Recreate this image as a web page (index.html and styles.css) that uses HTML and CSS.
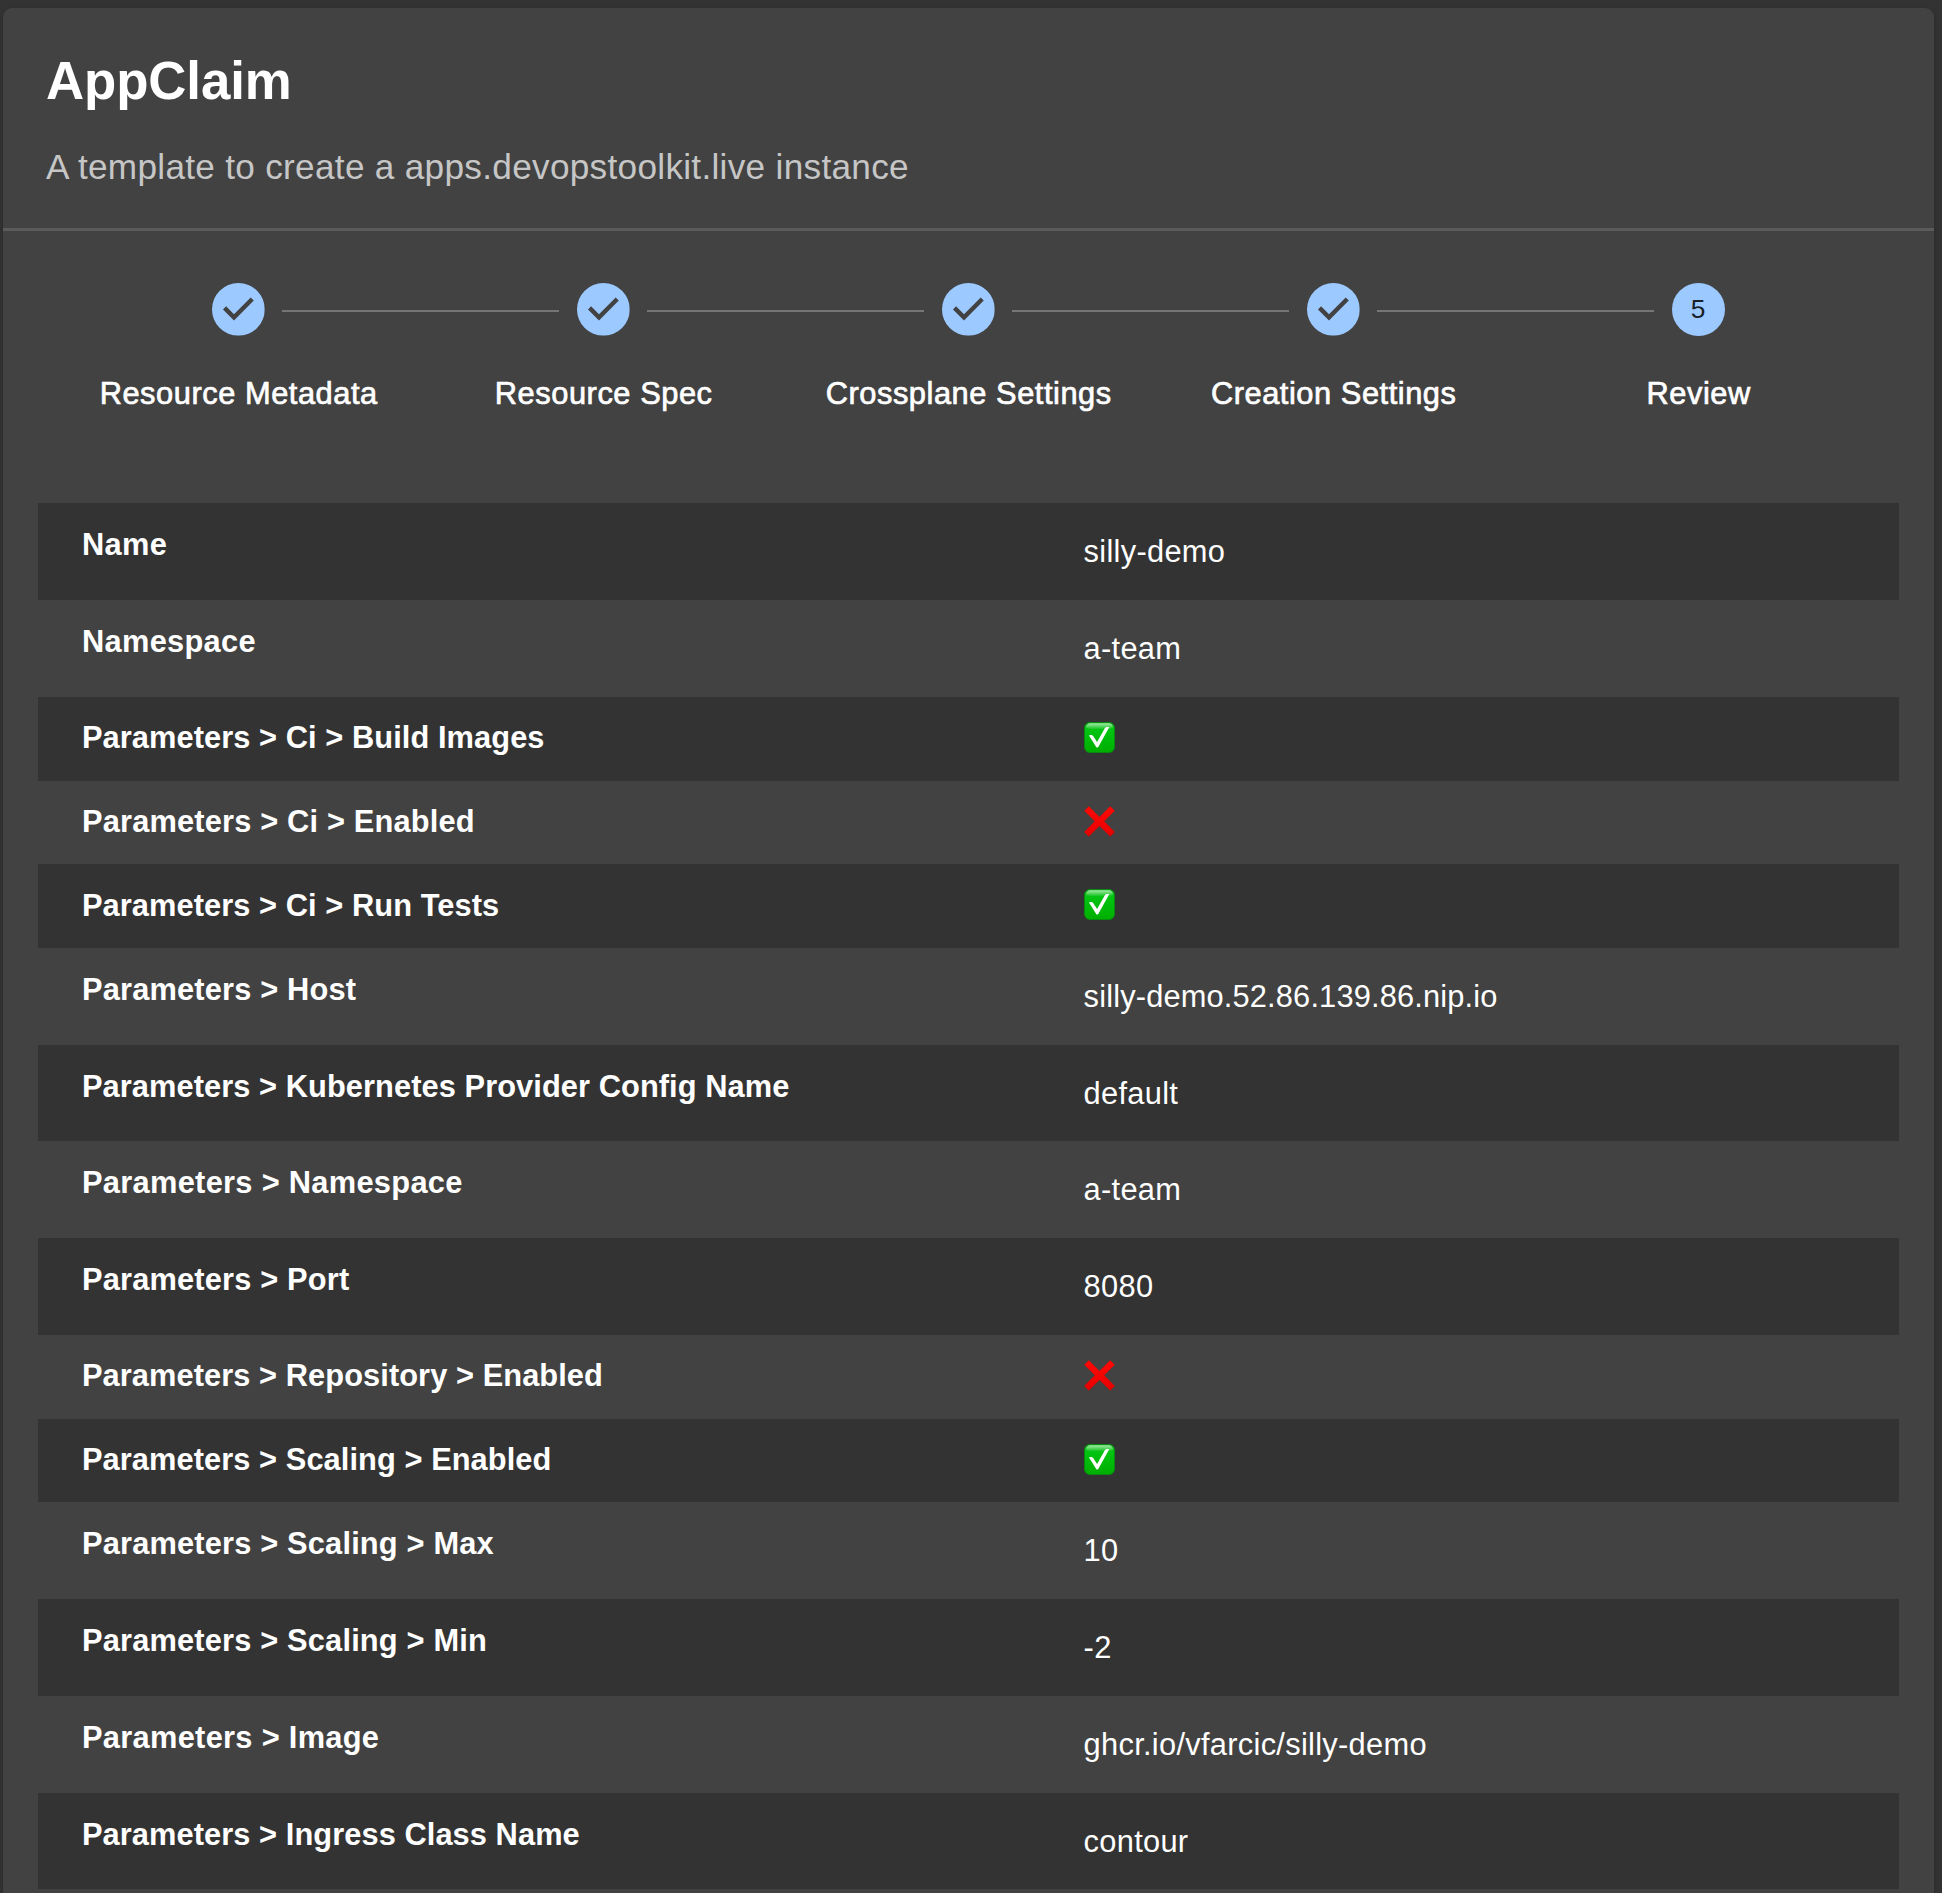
FILE: index.html
```html
<!DOCTYPE html>
<html lang="en">
<head>
<meta charset="utf-8">
<title>AppClaim</title>
<link rel="stylesheet" href="styles.css">
</head>
<body>
<svg width="0" height="0" class="defs" aria-hidden="true">
  <defs>
    <linearGradient id="green" x1="0" y1="0" x2="0" y2="1">
      <stop offset="0" stop-color="#12c41c"/>
      <stop offset=".3" stop-color="#00c210"/>
      <stop offset="1" stop-color="#00ae00"/>
    </linearGradient>
    <linearGradient id="gloss" x1="0" y1="0" x2="0" y2="1">
      <stop offset="0" stop-color="#fff" stop-opacity=".62"/>
      <stop offset="1" stop-color="#fff" stop-opacity=".06"/>
    </linearGradient>
    <linearGradient id="red" x1="0" y1="0" x2="0" y2="1">
      <stop offset="0" stop-color="#ff0a06"/>
      <stop offset="1" stop-color="#e60000"/>
    </linearGradient>
    <symbol id="done" viewBox="0 0 24 24">
      <path fill="#9cc9ff" d="M12 0a12 12 0 1 0 0 24 12 12 0 0 0 0-24zm-2 17l-5-5 1.4-1.4 3.6 3.6 7.6-7.6L19 8l-9 9z"/>
    </symbol>
    <symbol id="yes" viewBox="0 0 31 31">
      <rect x=".5" y=".5" width="30" height="30" rx="5.5" fill="url(#green)" stroke="#078a10"/>
      <path d="M6 1.2h19c2 0 3.4 1.4 4 3.4C29 6.6 26 7 24 7H7C5 7 2 6.6 2 4.600 2.600 2.600 4 1.200 6 1.200z" fill="url(#gloss)"/>
      <path d="M5 13.500c1.600-.8 3.400-.6 4.200.6l3.900 6L20.800 6.200c.8-1.300 2.700-1.400 4.400-1L14.300 25c-.6.800-1.600.8-2.100 0z" fill="#fff"/>
    </symbol>
    <symbol id="no" viewBox="0 0 31 31">
      <path d="M4.800.3L15.500 10.900 26.200.3l4.500 4.500-10.500 10.500 10.500 10.700-4.500 4.500-10.700-10.500L4.800 30.500.3 26 10.800 15.300.3 4.800z" fill="url(#red)" stroke="#a51512" stroke-opacity=".6" stroke-width=".4"/>
    </symbol>
  </defs>
</svg>
<main class="card">
  <header class="card-header">
    <h1 class="title">AppClaim</h1>
    <p class="subtitle">A template to create a apps.devopstoolkit.live instance</p>
  </header>
  <ol class="stepper">
    <li class="step"><div class="track"><span class="line off"></span><svg class="dot"><use href="#done"/></svg><span class="line"></span></div><span class="step-label">Resource Metadata</span></li>
    <li class="step"><div class="track"><span class="line"></span><svg class="dot"><use href="#done"/></svg><span class="line"></span></div><span class="step-label">Resource Spec</span></li>
    <li class="step"><div class="track"><span class="line"></span><svg class="dot"><use href="#done"/></svg><span class="line"></span></div><span class="step-label">Crossplane Settings</span></li>
    <li class="step"><div class="track"><span class="line"></span><svg class="dot"><use href="#done"/></svg><span class="line"></span></div><span class="step-label">Creation Settings</span></li>
    <li class="step"><div class="track"><span class="line"></span><span class="dot number">5</span><span class="line off"></span></div><span class="step-label">Review</span></li>
  </ol>
  <dl class="review">
    <div class="row"><dt class="roomy">Name</dt><dd>silly-demo</dd></div>
    <div class="row"><dt class="roomy">Namespace</dt><dd>a-team</dd></div>
    <div class="row flag"><dt class="compact">Parameters &gt; Ci &gt; Build Images</dt><dd><svg class="mark" role="img" aria-label="Yes"><use href="#yes"/></svg></dd></div>
    <div class="row flag"><dt>Parameters &gt; Ci &gt; Enabled</dt><dd><svg class="mark" role="img" aria-label="No"><use href="#no"/></svg></dd></div>
    <div class="row flag"><dt class="compact">Parameters &gt; Ci &gt; Run Tests</dt><dd><svg class="mark" role="img" aria-label="Yes"><use href="#yes"/></svg></dd></div>
    <div class="row"><dt>Parameters &gt; Host</dt><dd class="compact">silly-demo.52.86.139.86.nip.io</dd></div>
    <div class="row"><dt class="compact">Parameters &gt; Kubernetes Provider Config Name</dt><dd>default</dd></div>
    <div class="row"><dt class="roomy">Parameters &gt; Namespace</dt><dd>a-team</dd></div>
    <div class="row"><dt>Parameters &gt; Port</dt><dd>8080</dd></div>
    <div class="row flag"><dt class="compact">Parameters &gt; Repository &gt; Enabled</dt><dd><svg class="mark" role="img" aria-label="No"><use href="#no"/></svg></dd></div>
    <div class="row flag"><dt class="compact">Parameters &gt; Scaling &gt; Enabled</dt><dd><svg class="mark" role="img" aria-label="Yes"><use href="#yes"/></svg></dd></div>
    <div class="row"><dt>Parameters &gt; Scaling &gt; Max</dt><dd>10</dd></div>
    <div class="row"><dt>Parameters &gt; Scaling &gt; Min</dt><dd>-2</dd></div>
    <div class="row"><dt class="roomy">Parameters &gt; Image</dt><dd>ghcr.io/vfarcic/silly-demo</dd></div>
    <div class="row"><dt class="compact">Parameters &gt; Ingress Class Name</dt><dd>contour</dd></div>
  </dl>
</main>
</body>
</html>
```
FILE: styles.css
```css
* {
  box-sizing: border-box;
}

html,
body {
  height: 1893px;
  margin: 0;
  overflow: hidden;
}

body {
  display: flex;
  padding: 8px 8px 0 3px;
  background: #333;
  color: #fff;
  font-family: "Liberation Sans", Arial, sans-serif;
}

h1, p, ol, dl, dd {
  margin: 0;
  padding: 0;
}

.defs {
  position: absolute;
}

.card {
  width: 1931px;
  height: 1920px;
  flex: none;
  border-radius: 9px;
  background: #424242;
  box-shadow: 0 4px 2px -2px rgba(0, 0, 0, .2), 0 2px 2px rgba(0, 0, 0, .14), 0 2px 7px rgba(0, 0, 0, .12);
}

.card-header {
  height: 223px;
  padding: 42px 43px 0;
  border-bottom: 3px solid #5b5b5b;
}

.title {
  font-size: 52.8px;
  line-height: 62px;
  letter-spacing: -.1px;
}

.subtitle {
  margin-top: 32px;
  font-size: 35.2px;
  line-height: 46px;
  letter-spacing: .29px;
  color: #c6c6c6;
}

.stepper {
  display: flex;
  height: 272.4px;
  padding: 52px 53px 0 52.7px;
  list-style: none;
}

.step {
  width: 365px;
  flex: none;
  text-align: center;
}

.track {
  display: flex;
  align-items: center;
  gap: 17.6px;
}

.line {
  flex: 1;
  height: 2px;
  margin-top: 3px;
  background: #757575;
}

.line.off {
  visibility: hidden;
}

.dot {
  flex: none;
  width: 52.8px;
  height: 52.8px;
}

.number {
  border-radius: 50%;
  background: #9cc9ff;
  color: rgba(0, 0, 0, .87);
  font-size: 26.4px;
  line-height: 52.8px;
}

.step-label {
  display: block;
  margin-top: 36px;
  padding-left: 1px;
  font-size: 30.8px;
  line-height: 44px;
  letter-spacing: .55px;
  white-space: nowrap;
  -webkit-text-stroke: .7px #fff;
}

.review {
  margin: 0 35px;
}

.row {
  display: flex;
  height: 96.8px;
  padding: 20px 0 0 44px;
  font-size: 30.8px;
  line-height: 44px;
}

.row:nth-child(odd) {
  background: #333;
}

.row.flag {
  height: 83.6px;
  padding-top: 19.4px;
}

dt {
  width: 1001.6px;
  flex: none;
  font-weight: 700;
  letter-spacing: .17px;
}

dt.compact {
  letter-spacing: .07px;
}

dt.roomy {
  letter-spacing: .3px;
}

dd {
  padding-top: 7px;
  letter-spacing: .3px;
}

dd.compact {
  letter-spacing: .16px;
}

.flag dd {
  padding-top: 5.6px;
  padding-left: .4px;
}

.mark {
  display: block;
  width: 31px;
  height: 31px;
}
```
